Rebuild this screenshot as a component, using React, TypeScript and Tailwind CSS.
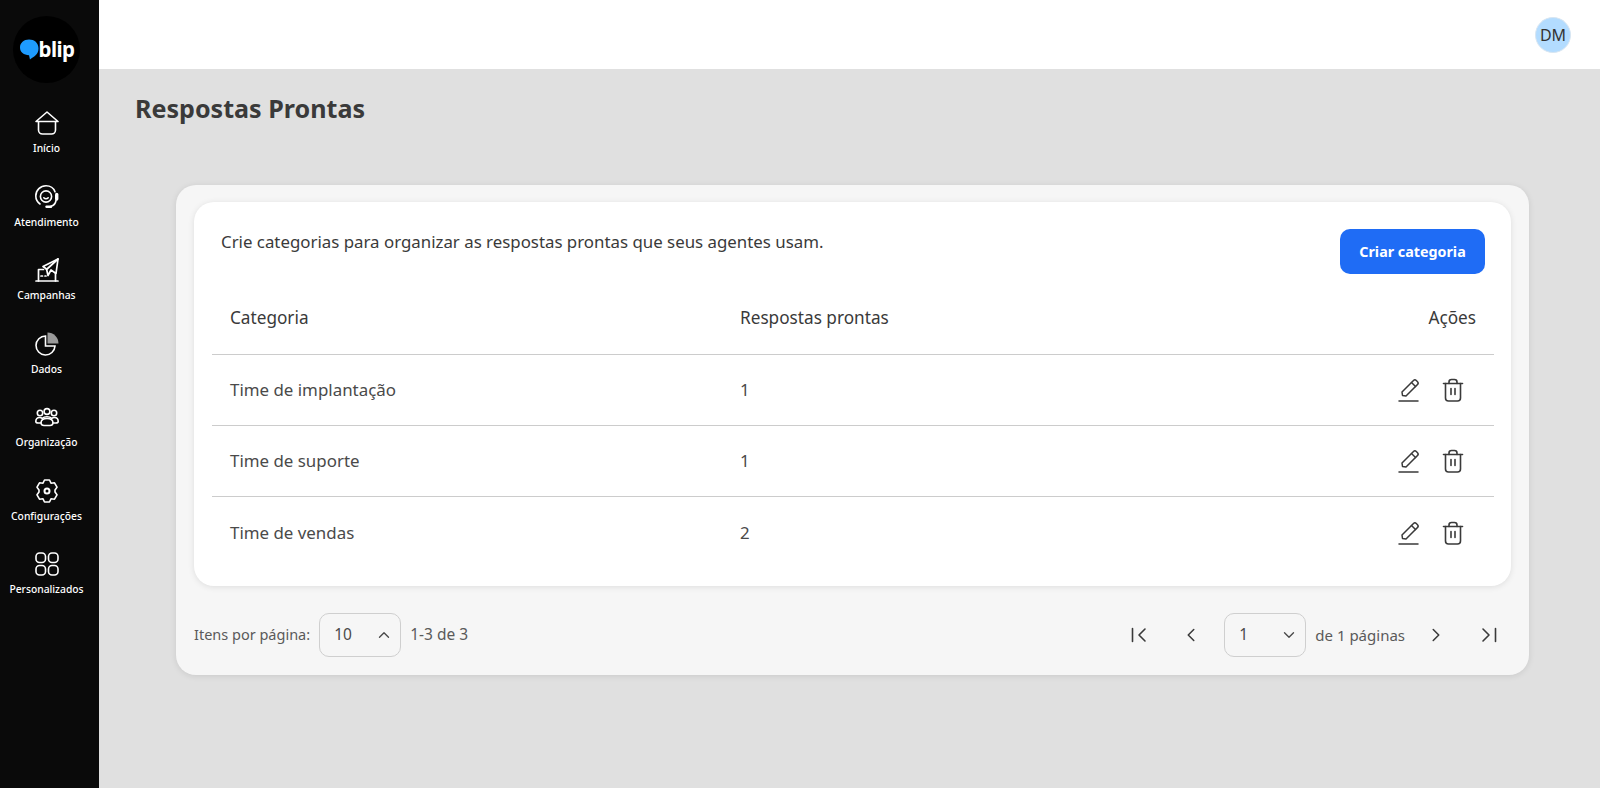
import { ChevronDown, ChevronLeft, ChevronRight, ChevronUp } from "lucide-react"

const rows = [
  { name: "Time de implantação", count: 1 },
  { name: "Time de suporte", count: 1 },
  { name: "Time de vendas", count: 2 },
]

function HomeIcon() {
  return (
    <svg width="24" height="24" viewBox="0 0 24 24" fill="none" stroke="white" strokeWidth="1.6" strokeLinejoin="round">
      <path d="M1 10.500 12 1 23 10.500Z" />
      <path d="M3.500 10.500V19a4 4 0 0 0 4 4h9a4 4 0 0 0 4-4v-8.500" />
    </svg>
  )
}

function AgentIcon() {
  return (
    <svg width="24" height="24" viewBox="0 0 24 24" fill="none" stroke="white" strokeWidth="1.600" strokeLinecap="round">
      <path d="M5 19C2.300 17 .8 14.200.8 11 .8 5 5.500.8 11 .8c4 0 7.500 2 9 6" />
      <circle cx="11" cy="11.500" r="5.600" />
      <path d="M8.800 12.800c1.200 1.300 3.200 1.300 4.400 0" />
      <path d="M21.700 9.500v4.500" strokeWidth="3.400" />
      <path d="M21 15.500c-.5 3-2 5-5 5.800" />
      <path d="M11.500 21.800h4.500" strokeWidth="2.400" />
    </svg>
  )
}

function CampaignIcon() {
  return (
    <svg width="24" height="24" viewBox="0 0 24 24" fill="none" stroke="white" strokeWidth="1.7" strokeLinejoin="round" strokeLinecap="round">
      <path d="M1 23h22" />
      <path d="M3.500 23V11.500h5" />
      <path d="M20.500 15v8" />
      <path d="M8 8.500 23 1l-2 14.500-5-3.500-3 5.500-1.500-6.500Z" />
      <path d="M11.500 11.500 23 1" />
      <path d="M6 18h1.500M10 18h1" />
    </svg>
  )
}

function ChartIcon() {
  return (
    <svg width="24" height="24" viewBox="0 0 24 24" fill="none" stroke="white" strokeWidth="1.6">
      <path d="M10.500 4a9.500 9.500 0 1 0 9.500 10h-9.500Z" />
      <path d="M12.500 0.500a11 11 0 0 1 11 11h-11Z" fill="#9a9a9a" stroke="none" />
    </svg>
  )
}

function TeamIcon() {
  return (
    <svg width="24" height="24" viewBox="0 0 24 24" fill="none" stroke="white" strokeWidth="1.600" strokeLinejoin="round">
      <circle cx="5" cy="8" r="2.700" />
      <circle cx="12" cy="6.500" r="2.900" />
      <circle cx="19" cy="8" r="2.700" />
      <path d="M.8 16.500c0-2.700 1.500-4 3.700-4 1 0 2 .3 2.700.9 1.200-1.100 2.900-1.700 4.800-1.700s3.600.6 4.800 1.700c.7-.6 1.700-.9 2.700-.9 2.200 0 3.700 1.300 3.700 4 0 1-1 1.500-2.500 1.500H18c-.2 1.800-1.500 2.500-3 2.500H9c-1.500 0-2.800-.7-3-2.500H3.300c-1.500 0-2.500-.5-2.500-1.500Z" />
      <path d="M6 18c0-3 2.500-4.500 6-4.500s6 1.500 6 4.500" />
    </svg>
  )
}

function GearIcon() {
  return (
    <svg width="24" height="24" viewBox="0 0 24 24" fill="none" stroke="white" strokeWidth="1.600" strokeLinejoin="round">
      <path d="M9.500 1h5l1.500 3.200 3.500-.4 2.500 4.400-2 2.800v2l2 2.800-2.500 4.400-3.500-.4L14.500 23h-5L8 19.800l-3.500.4L2 15.800 4 13v-2L2 8.200l2.500-4.400 3.500.4Z" />
      <circle cx="12" cy="12" r="2.500" strokeWidth="2" />
    </svg>
  )
}

function GridIcon() {
  return (
    <svg width="24" height="24" viewBox="0 0 24 24" fill="none" stroke="white" strokeWidth="1.600">
      <rect x="1" y="1" width="9.500" height="9.500" rx="3.500" />
      <rect x="13.500" y="1" width="9.500" height="9.500" rx="3.500" />
      <rect x="1" y="13.500" width="9.500" height="9.500" rx="3.500" />
      <rect x="13.500" y="13.500" width="9.500" height="9.500" rx="3.500" />
    </svg>
  )
}

function EditIcon() {
  return (
    <svg width="24" height="24" viewBox="0 0 24 24" fill="none" stroke="#3a3a3a" strokeWidth="1.500" strokeLinejoin="round" strokeLinecap="round">
      <path d="M5.500 17.500 5 14 16.500 2.500a2 2 0 0 1 2.800 0l1.200 1.200a2 2 0 0 1 0 2.800L9 18Z" />
      <path d="m14.500 4.500 4 4" />
      <path d="M2 23h19" />
    </svg>
  )
}

function TrashIcon() {
  return (
    <svg width="24" height="24" viewBox="0 0 24 24" fill="none" stroke="#3a3a3a" strokeWidth="1.600" strokeLinecap="round" strokeLinejoin="round">
      <path d="M2.500 5.500h19" />
      <path d="M8 5.500V4a2.500 2.500 0 0 1 2.500-2.500h3A2.500 2.500 0 0 1 16 4v1.500" />
      <path d="M4.500 5.500V20a3 3 0 0 0 3 3h9a3 3 0 0 0 3-3V5.500" />
      <path d="M10 10.500v6M14 10.500v6" />
    </svg>
  )
}

function Logo() {
  return (
    <div className="flex h-[67px] w-[67px] items-center justify-center rounded-full bg-black pl-[1px]">
      <svg width="19" height="21" viewBox="0 0 20 21" className="shrink-0">
        <path d="M9.500 0C15 0 19.500 3.500 19.500 9.500c0 6-4.500 8.500-9 11.500l-1-4.500C4 16.500 0 13.500 0 8.500 0 3.500 4 0 9.500 0Z" fill="#1e9bff" />
      </svg>
      <span className="font-['Noto_Sans',sans-serif] text-[20.500px] leading-none font-bold tracking-[-0.6px] text-white">blip</span>
    </div>
  )
}

const navItems = [
  { label: "Início", icon: <HomeIcon /> },
  { label: "Atendimento", icon: <AgentIcon /> },
  { label: "Campanhas", icon: <CampaignIcon /> },
  { label: "Dados", icon: <ChartIcon /> },
  { label: "Organização", icon: <TeamIcon /> },
  { label: "Configurações", icon: <GearIcon /> },
  { label: "Personalizados", icon: <GridIcon /> },
]

function PageSelect({ value, up }: { value: string; up?: boolean }) {
  return (
    <div className="flex h-[44px] w-[82px] items-center justify-between rounded-[10px] border border-[#cfcfcf] pr-[7px] pl-[14px] text-[15.500px] text-[#4a4a4a]">
      <span>{value}</span>
      {up ? <ChevronUp size={18} strokeWidth={1.8} /> : <ChevronDown size={18} strokeWidth={1.8} />}
    </div>
  )
}

function FirstLast({ last }: { last?: boolean }) {
  return (
    <svg width="16" height="16" viewBox="0 0 16 16" fill="none" stroke="#3a3a3a" strokeWidth="1.600" strokeLinecap="round" strokeLinejoin="round">
      {last ? <path d="M2 2l6 6-6 6M14.500 1.500v13" /> : <path d="M14 2 8 8l6 6M1.500 1.500v13" />}
    </svg>
  )
}

export default function App() {
  return (
    <div className="flex h-[788px] w-full overflow-hidden bg-[#e0e0e0] font-['Noto_Sans',sans-serif]">
      <aside className="flex w-[99px] shrink-0 flex-col items-center bg-[#0a0a0a] pt-[16px] pr-[6px]">
        <Logo />
        <nav className="mt-[28px] flex w-full flex-col items-center gap-[29.500px]">
          {navItems.map((item) => (
            <div key={item.label} className="flex h-[44px] w-full flex-col items-center justify-between">
              {item.icon}
              <span className="text-[10.300px] leading-[14px] font-medium whitespace-nowrap text-white">{item.label}</span>
            </div>
          ))}
        </nav>
      </aside>

      <div className="flex min-w-0 flex-1 flex-col">
        <header className="flex h-[69px] shrink-0 items-center justify-end bg-white pr-[29px]">
          <div className="flex h-[36px] w-[36px] items-center justify-center rounded-full border border-[#d8e6f2] bg-[#b3dcff] text-[16px] text-[#333]">
            DM
          </div>
        </header>

        <h1 className="mt-[21px] ml-[36px] text-[25.100px] leading-[36px] font-bold text-[#3a3a3a]">Respostas Prontas</h1>

        <section className="mt-[59px] mr-[71px] ml-[77px] rounded-[20px] bg-[#f6f6f6] px-[18px] pt-[17px] shadow-[0_1px_6px_rgba(0,0,0,0.1)]">
          <div className="h-[384px] rounded-[20px] bg-white pt-[27px] pr-[17px] pl-[18px] shadow-[0_1px_6px_rgba(0,0,0,0.1)]">
            <div className="flex items-start justify-between pr-[9px] pl-[9px]">
              <p className="text-[16.850px] leading-[26px] text-[#3a3a3a]">
                Crie categorias para organizar as respostas prontas que seus agentes usam.
              </p>
              <button
                type="button"
                className="flex h-[45px] w-[145px] items-center justify-center rounded-[10px] bg-[#1f6cf5] text-[14.300px] font-bold text-white"
              >
                Criar categoria
              </button>
            </div>

            <div className="flex h-[81px] items-center border-b border-[#cccccc] px-[18px] pt-[7px] text-[17.200px] text-[#3a3a3a]">
              <span className="w-[510px]">Categoria</span>
              <span className="flex-1">Respostas prontas</span>
              <span>Ações</span>
            </div>

            {rows.map((row, i) => (
              <div
                key={row.name}
                className={`flex h-[71px] items-center px-[18px] text-[16.900px] text-[#4a4a4a] ${
                  i < rows.length - 1 ? "border-b border-[#cccccc]" : ""
                }`}
              >
                <span className="w-[510px]">{row.name}</span>
                <span className="flex-1">{row.count}</span>
                <div className="flex items-center gap-[20px] pr-[11px]">
                  <EditIcon />
                  <TrashIcon />
                </div>
              </div>
            ))}
          </div>

          <div className="flex h-[89px] items-center justify-between pt-[9px] text-[14.500px] text-[#5a5a5a]">
            <div className="flex items-center gap-[9px]">
              <span>Itens por página:</span>
              <PageSelect value="10" up />
              <span className="text-[15.500px]">1-3 de 3</span>
            </div>
            <div className="flex items-center pr-[14px] text-[#3a3a3a]">
              <FirstLast />
              <ChevronLeft size={22} strokeWidth={1.700} className="mr-[22px] ml-[33px]" />
              <PageSelect value="1" />
              <span className="ml-[9px] text-[15px] text-[#5a5a5a]">de 1 páginas</span>
              <ChevronRight size={22} strokeWidth={1.700} className="mr-[34px] ml-[20px]" />
              <FirstLast last />
            </div>
          </div>
        </section>
      </div>
    </div>
  )
}
